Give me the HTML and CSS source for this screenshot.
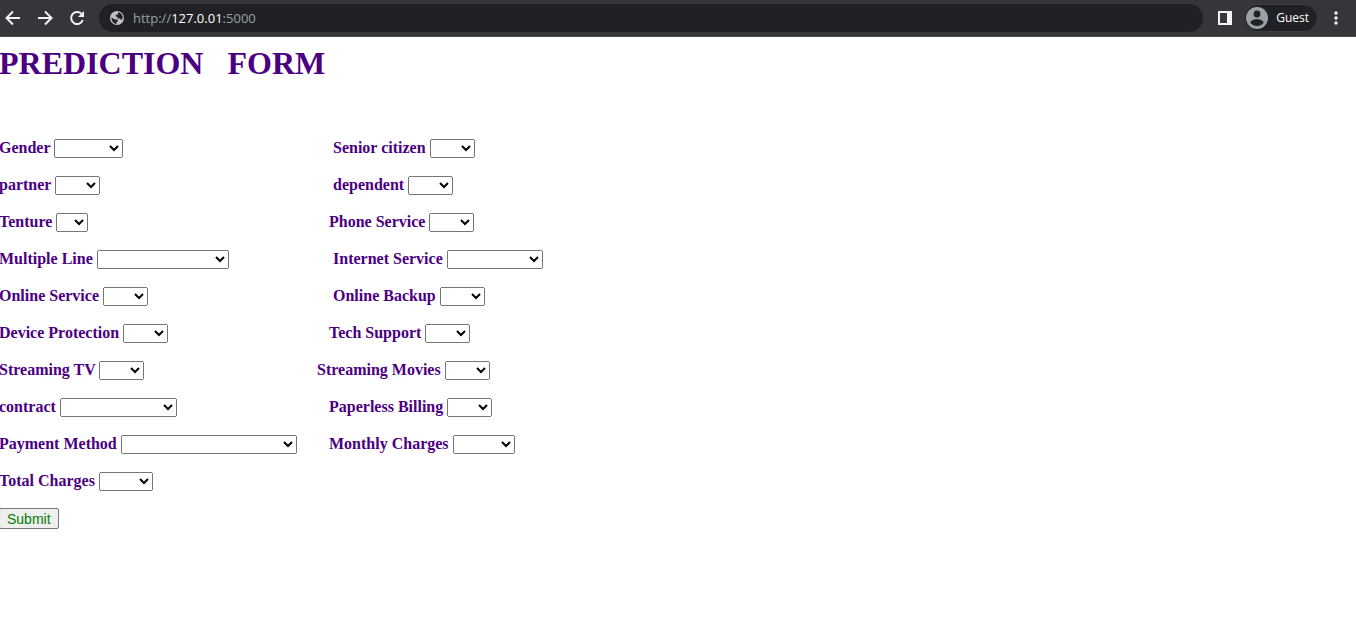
FILE: index.html
```html
<!DOCTYPE html>
<html lang="en">
<head>
<meta charset="utf-8">
<title>Prediction Form</title>
<link rel="stylesheet" href="styles.css">
</head>
<body>
<header class="toolbar">
  <nav class="nav">
    <button class="icon-btn" type="button" aria-label="Back"><svg width="18" height="18" viewBox="0 0 18 18"><path d="M16 9H3M9 2.500 2.500 9 9 15.500"/></svg></button>
    <button class="icon-btn" type="button" aria-label="Forward"><svg width="18" height="18" viewBox="0 0 18 18"><path d="M2 9h13M9 2.500 15.500 9 9 15.500"/></svg></button>
    <button class="icon-btn" type="button" aria-label="Reload"><svg width="18" height="18" viewBox="0 0 18 18"><path d="M14.800 11A6 6 0 1 1 13.400 4.800"/><path class="solid" d="M16 2v6h-6z"/></svg></button>
  </nav>
  <div class="address">
    <svg class="globe" width="16" height="16" viewBox="0 0 16 16"><circle cx="8" cy="8" r="7"/><path class="land" d="M2.500 7.500 6 9.500h2.500L9 11l-1.500 1.200V14C4.500 13.500 2.300 11 2.500 7.500zM9 2.300c3 .5 5 3 4.700 6L12.500 10 11 8.500H8.500V6.800L6.500 6.500 7 4.800l2-.3z"/></svg>
    <span class="url">http://<span class="host">127.0.01</span>:5000</span>
  </div>
  <button class="icon-btn" type="button" aria-label="Side panel"><svg width="14" height="14" viewBox="0 0 14 14"><path class="solid" fill-rule="evenodd" d="M0 0h14v14H0zM2 2v10h7V2z"/></svg></button>
  <button class="profile" type="button">
    <svg width="22" height="22" viewBox="0 0 22 22"><circle cx="11" cy="11" r="11" fill="#9aa0a6"/><circle cx="11" cy="7" r="3.400" fill="#202124"/><path d="M4.500 16c0-5 13-5 13 0-3 4-10 4-13 0z" fill="#202124"/></svg>
    Guest
  </button>
  <button class="icon-btn" type="button" aria-label="Menu"><svg width="4" height="14" viewBox="0 0 4 14"><circle class="solid" cx="2" cy="2" r="1.700"/><circle class="solid" cx="2" cy="7" r="1.700"/><circle class="solid" cx="2" cy="12" r="1.700"/></svg></button>
</header>
<main class="page">
  <h1 class="title">PREDICTION &nbsp; FORM</h1>
  <form class="form">
    <div class="row">
      <div class="field"><label for="gender">Gender</label> <select id="gender" class="w-gender"><option></option><option>Male</option><option>Female</option></select></div>
      <div class="field indent"><label for="senior">Senior citizen</label> <select id="senior"><option></option><option>Yes</option><option>No</option></select></div>
    </div>
    <div class="row">
      <div class="field"><label for="partner">partner</label> <select id="partner"><option></option><option>Yes</option><option>No</option></select></div>
      <div class="field indent"><label for="dependent">dependent</label> <select id="dependent"><option></option><option>Yes</option><option>No</option></select></div>
    </div>
    <div class="row">
      <div class="field"><label for="tenure">Tenture</label> <select id="tenure" class="w-tenure"><option></option><option>1</option><option>2</option></select></div>
      <div class="field"><label for="phone">Phone Service</label> <select id="phone"><option></option><option>Yes</option><option>No</option></select></div>
    </div>
    <div class="row">
      <div class="field"><label for="lines">Multiple Line</label> <select id="lines" class="w-lines"><option></option><option>No phone service</option><option>Yes</option><option>No</option></select></div>
      <div class="field indent"><label for="internet">Internet Service</label> <select id="internet" class="w-internet"><option></option><option>DSL</option><option>Fiber optic</option><option>No</option></select></div>
    </div>
    <div class="row">
      <div class="field"><label for="security">Online Service</label> <select id="security"><option></option><option>Yes</option><option>No</option></select></div>
      <div class="field indent"><label for="backup">Online Backup</label> <select id="backup"><option></option><option>Yes</option><option>No</option></select></div>
    </div>
    <div class="row">
      <div class="field"><label for="device">Device Protection</label> <select id="device"><option></option><option>Yes</option><option>No</option></select></div>
      <div class="field"><label for="tech">Tech Support</label> <select id="tech"><option></option><option>Yes</option><option>No</option></select></div>
    </div>
    <div class="row row-wide">
      <div class="field"><label for="tv">Streaming TV</label> <select id="tv"><option></option><option>Yes</option><option>No</option></select></div>
      <div class="field"><label for="movies">Streaming Movies</label> <select id="movies"><option></option><option>Yes</option><option>No</option></select></div>
    </div>
    <div class="row">
      <div class="field"><label for="contract">contract</label> <select id="contract" class="w-contract"><option></option><option>Month-to-month</option><option>One year</option><option>Two year</option></select></div>
      <div class="field"><label for="paperless">Paperless Billing</label> <select id="paperless"><option></option><option>Yes</option><option>No</option></select></div>
    </div>
    <div class="row">
      <div class="field"><label for="payment">Payment Method</label> <select id="payment" class="w-payment"><option></option><option>Electronic check</option><option>Mailed check</option><option>Bank transfer (automatic)</option></select></div>
      <div class="field"><label for="monthly">Monthly Charges</label> <select id="monthly" class="w-monthly"><option></option><option>29.85</option><option>56.95</option></select></div>
    </div>
    <div class="row">
      <div class="field"><label for="total">Total Charges</label> <select id="total" class="w-total"><option></option><option>29.8</option><option>1889</option></select></div>
    </div>
    <button class="submit" type="submit">Submit</button>
  </form>
</main>
</body>
</html>
```
FILE: styles.css
```css
* {
  box-sizing: border-box;
}

body {
  margin: 0;
  background: #fff;
  font-family: "Liberation Serif", "Times New Roman", serif;
  font-size: 16px;
  overflow-x: hidden;
}

.toolbar {
  display: flex;
  align-items: center;
  height: 37px;
  padding: 0 18px 1px 4px;
  background: #35363a;
  border-bottom: 1px solid #4c4d50;
  font-family: "Open Sans", "Noto Sans", sans-serif;
}

.nav {
  display: flex;
  gap: 14px;
}

.icon-btn {
  display: flex;
  padding: 0;
  border: 0;
  background: none;
}

.icon-btn path {
  fill: none;
  stroke: #f1f3f4;
  stroke-width: 2;
}

.icon-btn .solid {
  fill: #f1f3f4;
  stroke: none;
}

.address {
  display: flex;
  flex: 1;
  align-items: center;
  gap: 8px;
  height: 28px;
  margin: 0 15px 0 13px;
  padding: 0 10px;
  border-radius: 14px;
  background: #202124;
}

.globe {
  fill: #bdc1c6;
}

.globe .land {
  fill: #202124;
}

.url {
  color: #9aa0a6;
  font-size: 13px;
}

.host {
  color: #fff;
}

.profile {
  display: flex;
  align-items: center;
  gap: 8px;
  height: 28px;
  margin: 0 16px 0 12px;
  padding: 0 8px 0 1px;
  border: 1px solid #3c3d41;
  border-radius: 14px;
  background: #202124;
  color: #fff;
  font: 12px "Open Sans", "Noto Sans", sans-serif;
}

.page {
  margin-left: -1px;
  color: #4b0082;
}

.title {
  margin: 8px 0 56px;
  font-size: 32px;
  line-height: 37px;
}

.form {
  display: flex;
  flex-direction: column;
  align-items: flex-start;
  gap: 18px;
}

.row {
  display: grid;
  grid-template-columns: 330px auto;
  height: 19px;
}

.row-wide {
  grid-template-columns: 318px auto;
}

.field {
  font-weight: bold;
  line-height: 19px;
  white-space: nowrap;
}

.indent {
  padding-left: 4px;
}

select {
  width: 45px;
  height: 19px;
  font: 13px "Liberation Sans", Arial, sans-serif;
}

.w-gender { width: 69px; }
.w-tenure { width: 32px; }
.w-lines { width: 132px; }
.w-internet { width: 96px; }
.w-contract { width: 117px; }
.w-payment { width: 176px; }
.w-monthly { width: 62px; }
.w-total { width: 54px; }

.submit {
  height: 21px;
  padding: 1px 7px;
  border: 1px solid #767676;
  border-radius: 2px;
  background: #efefef;
  color: #008000;
  font: 14px "Liberation Sans", Arial, sans-serif;
}
```
